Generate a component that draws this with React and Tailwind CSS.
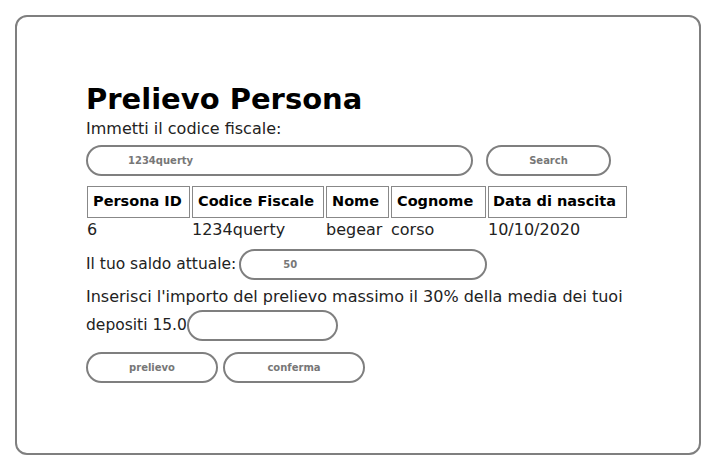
export default function App() {
  return (
    <div className="w-[718px] h-[468px] bg-white p-[15px]" style={{ fontFamily: '"DejaVu Sans", sans-serif' }}>
      <div className="h-[440px] w-[686px] rounded-[12px] border-2 border-[#7f7f7f] pl-[69px] pt-[62px] text-black">
        <h1 className="text-[29px] font-bold leading-[40px]">Prelievo Persona</h1>
        <p className="text-[16px] leading-[20px] text-[#222]">Immetti il codice fiscale:</p>

        <div className="mt-[6px] flex gap-[13px]">
          <div className="flex h-[31px] w-[387px] items-center rounded-full border-2 border-[#7f7f7f] pl-[40px] text-[10px] font-bold text-[#777]">
            1234querty
          </div>
          <button className="h-[31px] w-[125px] rounded-full border-2 border-[#7f7f7f] text-[10px] font-bold text-[#777]">
            Search
          </button>
        </div>

        <table className="mt-[10px] border-separate border-spacing-x-[2px] border-spacing-y-0 -ml-[1px] whitespace-nowrap text-[14.5px]">
          <thead>
            <tr>
              <th className="w-[103px] border border-[#888] px-[5px] h-[32px] text-left font-bold">Persona ID</th>
              <th className="w-[132px] border border-[#888] px-[5px] text-left font-bold">Codice Fiscale</th>
              <th className="w-[63px] border border-[#888] px-[5px] text-left font-bold">Nome</th>
              <th className="w-[95px] border border-[#888] px-[5px] text-left font-bold">Cognome</th>
              <th className="w-[139px] border border-[#888] px-[4px] text-left font-bold">Data di nascita</th>
            </tr>
          </thead>
          <tbody>
            <tr className="text-[16px] text-[#222]">
              <td className="h-[24px] leading-[24px]">6</td>
              <td>1234querty</td>
              <td>begear</td>
              <td>corso</td>
              <td>10/10/2020</td>
            </tr>
          </tbody>
        </table>

        <div className="mt-[7px] flex items-center gap-[3px] text-[15.5px] text-[#222]">
          <span>Il tuo saldo attuale:</span>
          <div className="flex h-[31px] w-[248px] items-center rounded-full border-2 border-[#7f7f7f] pl-[42px] text-[10px] font-bold text-[#777]">
            50
          </div>
        </div>

        <p className="mt-[3px] text-[16px] leading-[28px] text-[#222]">
          Inserisci l'importo del prelievo massimo il 30% della media dei tuoi
        </p>
        <div className="-mt-[1px] flex items-center gap-0 text-[15.5px] text-[#222]">
          <span>depositi 15.0</span>
          <div className="h-[31px] w-[151px] rounded-full border-2 border-[#7f7f7f]"></div>
        </div>

        <div className="mt-[11px] flex gap-[5px]">
          <button className="h-[31px] w-[132px] rounded-full border-2 border-[#7f7f7f] text-[10px] font-bold text-[#777]">
            prelievo
          </button>
          <button className="h-[31px] w-[142px] rounded-full border-2 border-[#7f7f7f] text-[10px] font-bold text-[#777]">
            conferma
          </button>
        </div>
      </div>
    </div>
  );
}
